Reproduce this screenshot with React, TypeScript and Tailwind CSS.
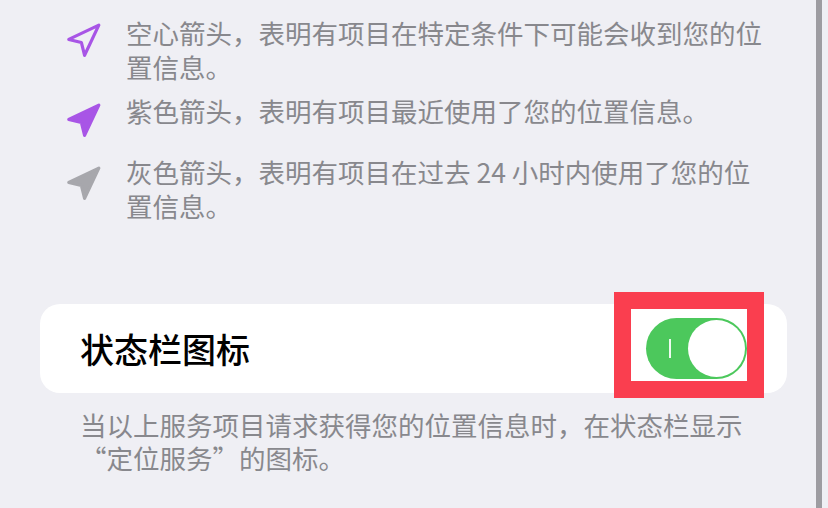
const PURPLE = "#a855e6";

function Arrow({ filled, color }: { filled?: boolean; color: string }) {
  return (
    <svg width="38" height="38" viewBox="0 0 24 24" className="shrink-0">
      <polygon
        points="3 11 22 2 13 21 11 13 3 11"
        fill={filled ? color : "none"}
        stroke={color}
        strokeWidth="2"
        strokeLinejoin="round"
        strokeLinecap="round"
      />
    </svg>
  );
}

const items = [
  {
    icon: <Arrow color={PURPLE} />,
    text: "空心箭头，表明有项目在特定条件下可能会收到您的位置信息。",
    wrap: "mt-[16px]",
    iconTop: "pt-[6px]",
  },
  {
    icon: <Arrow filled color={PURPLE} />,
    text: "紫色箭头，表明有项目最近使用了您的位置信息。",
    wrap: "mt-[10px]",
    iconTop: "pt-[8px]",
  },
  {
    icon: <Arrow filled color="#a7a7ac" />,
    text: "灰色箭头，表明有项目在过去 24 小时内使用了您的位置信息。",
    wrap: "mt-[27px]",
    iconTop: "pt-[10px]",
  },
];

export default function App() {
  return (
    <div
      className="flex w-[828px] h-[508px] overflow-hidden bg-[#efeff4]"
      style={{ fontFamily: '"Noto Sans CJK SC", "Noto Sans", sans-serif' }}
    >
      <div className="flex-1 flex flex-col">
        {/* legend */}
        {items.map((it, i) => (
          <div key={i} className={`flex items-start pl-[64px] ${it.wrap}`}>
            <div className={`h-[34px] w-[38px] shrink-0 ${it.iconTop}`}>{it.icon}</div>
            <p className="ml-[24px] w-[643px] text-[26.5px] leading-[34px] text-[#88888d]">{it.text}</p>
          </div>
        ))}

        {/* status bar icon row */}
        <div className="mt-[81px] ml-[40px] mr-[29px] h-[89px] rounded-[20px] bg-white flex items-center justify-between pl-[40px] pr-[40px]">
          <span className="text-[34px] font-medium leading-none text-black">状态栏图标</span>
          <div className="relative">
            <div className="w-[101px] h-[61px] rounded-full bg-[#4cc85c] flex items-center justify-between pl-[23px] pr-[2px]">
              <div className="w-[2px] h-[19px] bg-white/90" />
              <div className="w-[57px] h-[57px] rounded-full bg-white" />
            </div>
            <div className="absolute left-[-32px] top-[-26px] w-[150px] h-[106px] border-[17px] border-[#fa3e4f]" />
          </div>
        </div>

        <p className="mt-[15px] pl-[80px] text-[26.5px] leading-[33px] text-[#88888d]">
          当以上服务项目请求获得您的位置信息时，在状态栏显示
          <br />
          “定位服务”的图标。
        </p>
      </div>
      <div className="w-[6px] shrink-0 bg-[#9d9ca1]" />
      <div className="w-[6px] shrink-0" />
    </div>
  );
}
